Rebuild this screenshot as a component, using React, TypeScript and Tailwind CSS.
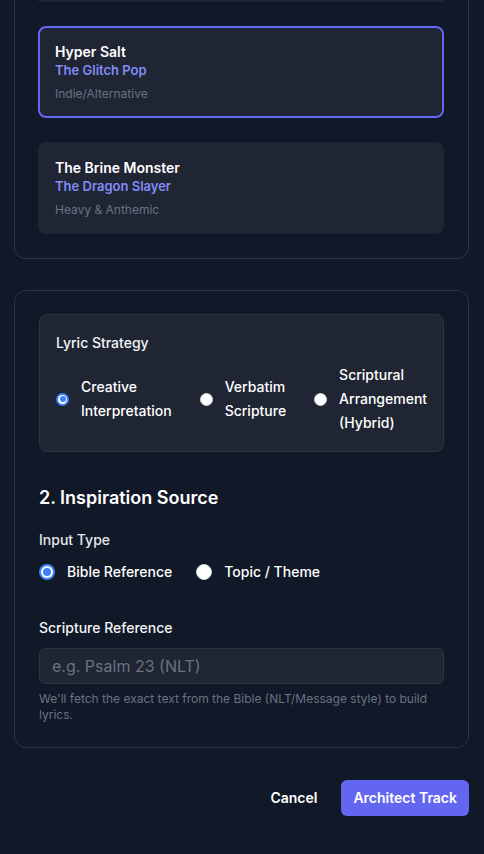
import { useState } from 'react'

type Style = {
  id: string
  name: string
  persona: string
  genre: string
}

const styles: Style[] = [
  { id: 'hyper-salt', name: 'Hyper Salt', persona: 'The Glitch Pop', genre: 'Indie/Alternative' },
  { id: 'brine-monster', name: 'The Brine Monster', persona: 'The Dragon Slayer', genre: 'Heavy & Anthemic' },
]

const strategies = [
  { id: 'creative', label: 'Creative Interpretation' },
  { id: 'verbatim', label: 'Verbatim Scripture' },
  { id: 'hybrid', label: 'Scriptural Arrangement (Hybrid)' },
]

function Radio({ checked, small }: { checked: boolean; small?: boolean }) {
  const size = small ? 'h-[13px] w-[13px]' : 'h-4 w-4'
  if (checked) {
    return (
      <span className={`${size} flex shrink-0 rounded-full bg-[#3b82f6] p-[2px]`}>
        <span className={`flex h-full w-full rounded-full bg-white ${small ? 'p-[1.5px]' : 'p-[2px]'}`}>
          <span className="h-full w-full rounded-full bg-[#3b82f6]" />
        </span>
      </span>
    )
  }
  return <span className={`${size} shrink-0 rounded-full border border-gray-300 bg-white`} />
}

export default function App() {
  const [style, setStyle] = useState('hyper-salt')
  const [strategy, setStrategy] = useState('creative')
  const [inputType, setInputType] = useState<'bible' | 'topic'>('bible')
  const [reference, setReference] = useState('')

  return (
    <div className="min-h-[854px] bg-[#111827] pl-[14px] pr-[15px] font-['Inter','Liberation_Sans',sans-serif] text-white">
      <div className="flex flex-col gap-[31px]">
        {/* style picker (scrolled part) */}
        <div className="flex flex-col gap-6 rounded-b-xl border border-t-0 border-[#2c3341] pb-6 pl-[23px] pr-6">
          <div className="h-[2px] rounded-b-lg bg-[#1f2533]" />
          {styles.map((s) => (
            <button
              key={s.id}
              type="button"
              onClick={() => setStyle(s.id)}
              className={`rounded-lg border-2 bg-[#1f2533] p-[14px] pl-[15px] text-left ${style === s.id ? 'border-[#6366f1]' : 'border-transparent'}`}
            >
              <div className="text-sm font-semibold leading-5 text-white">{s.name}</div>
              <div className="text-[13px] font-semibold leading-4 text-[#818cf8]">{s.persona}</div>
              <div className="mt-2 text-xs leading-4 text-gray-500">{s.genre}</div>
            </button>
          ))}
        </div>

        <div className="rounded-xl border border-[#2c3341] px-6 pb-6 pt-[23px]">
          <div className="rounded-lg border border-[#2c3341] bg-[#1f2533] p-4">
            <div className="text-sm font-medium leading-6 text-gray-100">Lyric Strategy</div>
            <div className="mt-2 flex items-center gap-7">
              {strategies.map((st) => (
                <label key={st.id} className="flex cursor-pointer items-center gap-3" onClick={() => setStrategy(st.id)}>
                  <Radio checked={strategy === st.id} small />
                  <span className="text-sm font-medium leading-6 text-white">{st.label}</span>
                </label>
              ))}
            </div>
          </div>

          <h3 className="mt-8 text-lg font-semibold leading-7 text-white">2. Inspiration Source</h3>

          <div className="mt-[18px] text-sm font-medium leading-5 text-gray-200">Input Type</div>
          <div className="mt-3 flex items-center gap-6">
            <label className="flex cursor-pointer items-center gap-3" onClick={() => setInputType('bible')}>
              <Radio checked={inputType === 'bible'} />
              <span className="text-sm font-medium leading-5 text-white">Bible Reference</span>
            </label>
            <label className="flex cursor-pointer items-center gap-3" onClick={() => setInputType('topic')}>
              <Radio checked={inputType === 'topic'} />
              <span className="text-sm font-medium leading-5 text-white">Topic / Theme</span>
            </label>
          </div>

          <div className="mt-9 text-sm font-medium leading-5 text-gray-100">Scripture Reference</div>
          <input
            value={reference}
            onChange={(e) => setReference(e.target.value)}
            placeholder="e.g. Psalm 23 (NLT)"
            className="mt-2.5 h-9 w-full rounded-md border border-[#2c3341] bg-[#1f2533] px-3 text-base text-white outline-none placeholder:text-gray-500"
          />
          <p className="mt-[7px] text-xs leading-4 text-gray-500">
            We'll fetch the exact text from the Bible (NLT/Message style) to build lyrics.
          </p>
        </div>
      </div>

      <div className="mt-8 flex justify-end gap-2">
        <button type="button" className="rounded-md px-4 py-2 text-sm font-semibold leading-5 text-white">
          Cancel
        </button>
        <button type="button" className="rounded-md bg-[#6366f1] px-3 py-2 text-sm font-semibold leading-5 text-white">
          Architect Track
        </button>
      </div>
    </div>
  )
}
